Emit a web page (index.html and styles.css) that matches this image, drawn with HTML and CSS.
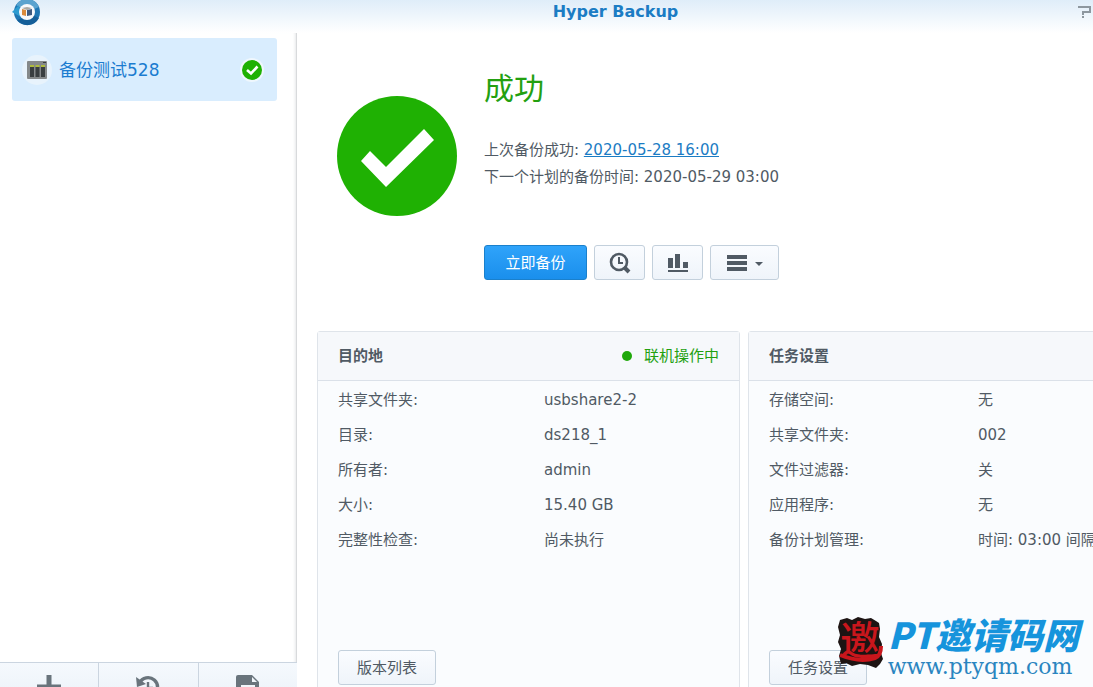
FILE: index.html
```html
<!DOCTYPE html>
<html lang="zh">
<head>
    <meta charset="UTF-8">
    <meta name="viewport" content="width=device-width, initial-scale=1.0">
    <title>Hyper Backup</title>
    <link rel="stylesheet" href="styles.css">
</head>

<body>
    <div class="window">
        <!-- 标题栏 -->
        <header class="titlebar">
            <svg class="logo" viewBox="0 0 28 28" aria-hidden="true">
                <circle cx="15" cy="14" r="13" fill="#1f76b3"/>
                <path d="M4 7 A13 13 0 0 1 27 9 L15 14 Z" fill="#5aa3cf"/>
                <path d="M0 14 L7 7 L9 19 Z" fill="#2c9bd0"/>
                <path d="M5 22 A13 13 0 0 0 27 20 L20 17 Z" fill="#155f99"/>
                <circle cx="15" cy="14" r="8" fill="#f6f9fc"/>
                <path d="M10 10 L15 9 L20 10 L15 12 Z" fill="#a8a8a4"/>
                <path d="M10 11 L14 12 V18 L10 17 Z" fill="#d98a3c"/>
                <path d="M15 12 L20 11 V17 L15 18 Z" fill="#3d5a80"/>
            </svg>
            <h1>Hyper Backup</h1>
            <button class="help" type="button" aria-label="帮助">
                <svg viewBox="0 0 16 14" width="16" height="14">
                    <path d="M1 2 H13 V7 H6 V10 M6 11 V13" fill="none" stroke="#8d979f" stroke-width="2"/>
                </svg>
            </button>
        </header>

        <div class="content">
            <!-- 左侧任务列表 -->
            <aside class="sidebar">
                <div class="task-list">
                    <a class="task" href="#">
                        <svg class="task-icon" viewBox="0 0 30 30" aria-hidden="true">
                            <circle cx="15" cy="15" r="15" fill="#e8f3fc"/>
                            <rect x="5" y="6" width="20" height="18" rx="1" fill="#85898a"/>
                            <path d="M8 12h4v10H8z M13.5 12h4v10h-4z M19 12h4v10h-4z" fill="#393e40"/>
                            <path d="M8 10h4v2H8z M13.5 10h4v2h-4z M19 10h4v2h-4z" fill="#aebb3e"/>
                            <path d="M21 7h3v1h-3z" fill="#393e40"/>
                        </svg>
                        <span class="task-name">备份测试528</span>
                        <svg class="task-state" viewBox="0 0 24 24" aria-label="成功">
                            <circle cx="12" cy="12" r="12" fill="#eff7fd"/>
                            <circle cx="12" cy="12" r="10" fill="#1fb103"/>
                            <path d="M7 12 L11 15.5 L17.5 8.5" fill="none" stroke="#fff" stroke-width="2.6"/>
                        </svg>
                    </a>
                </div>
                <div class="toolbar">
                    <button type="button" aria-label="新建">
                        <svg viewBox="0 0 24 24"><path d="M12 0v24 M0 12h24" stroke="#69747c" stroke-width="5"/></svg>
                    </button>
                    <button type="button" aria-label="还原">
                        <svg viewBox="0 0 24 24">
                            <path d="M3.5 8 A9.5 9.5 0 1 1 3 15" fill="none" stroke="#69747c" stroke-width="3.4"/>
                            <path d="M0 2 L1 12 L10 9 Z" fill="#69747c"/>
                            <path d="M12 7 V13 H17" fill="none" stroke="#69747c" stroke-width="2.4"/>
                        </svg>
                    </button>
                    <button type="button" aria-label="日志">
                        <svg viewBox="0 0 24 24">
                            <path d="M2 0 H16 L23 7 V22 a2 2 0 0 1 -2 2 H2 a2 2 0 0 1 -2 -2 V2 a2 2 0 0 1 2 -2z" fill="#69747c"/>
                            <path d="M16 2 V7 H21z" fill="#f0f5fa"/>
                            <path d="M5 11h14 M5 17h14" stroke="#f0f5fa" stroke-width="2"/>
                        </svg>
                    </button>
                </div>
            </aside>

            <main class="main">
                <!-- 备份状态 -->
                <section class="status">
                    <svg class="status-icon" viewBox="0 0 120 120" aria-hidden="true">
                        <circle cx="60" cy="60" r="60" fill="#1fb103"/>
                        <path d="M24 65 L33 55 L49 71 L87 33 L97 44 L49 91 Z" fill="#fff"/>
                    </svg>
                    <div class="status-body">
                        <h2>成功</h2>
                        <p>上次备份成功: <a href="#">2020-05-28 16:00</a></p>
                        <p>下一个计划的备份时间: 2020-05-29 03:00</p>
                        <div class="actions">
                            <button class="btn btn-primary" type="button">立即备份</button>
                            <button class="btn btn-icon" type="button" aria-label="浏览版本">
                                <svg viewBox="0 0 22 22" width="22" height="22">
                                    <circle cx="10" cy="10" r="8" fill="none" stroke="#505a64" stroke-width="2.6"/>
                                    <path d="M10 5 V11 H14" fill="none" stroke="#505a64" stroke-width="2"/>
                                    <path d="M15 15 L20 20" stroke="#505a64" stroke-width="4"/>
                                </svg>
                            </button>
                            <button class="btn btn-icon" type="button" aria-label="统计">
                                <svg viewBox="0 0 22 22" width="22" height="22">
                                    <path d="M1 6h5v10H1z M8 2h5v14H8z M16 10h5v6h-5z M1 18h20v2H1z" fill="#505a64"/>
                                </svg>
                            </button>
                            <button class="btn btn-menu" type="button" aria-label="更多">
                                <svg viewBox="0 0 36 22" width="36" height="22">
                                    <path d="M0 3h20v4H0z M0 9h20v4H0z M0 15h20v4H0z" fill="#505a64"/>
                                    <path d="M28 10h8l-4 4z" fill="#505a64"/>
                                </svg>
                            </button>
                        </div>
                    </div>
                </section>

                <!-- 详细信息 -->
                <div class="cards">
                    <section class="card">
                        <div class="card-head">
                            <h3>目的地</h3>
                            <span class="online">联机操作中</span>
                        </div>
                        <table>
                            <tr><th>共享文件夹:</th><td>usbshare2-2</td></tr>
                            <tr><th>目录:</th><td>ds218_1</td></tr>
                            <tr><th>所有者:</th><td>admin</td></tr>
                            <tr><th>大小:</th><td>15.40 GB</td></tr>
                            <tr><th>完整性检查:</th><td>尚未执行</td></tr>
                        </table>
                        <div class="card-foot"><button class="btn" type="button">版本列表</button></div>
                    </section>
                    <section class="card card-settings">
                        <div class="card-head">
                            <h3>任务设置</h3>
                        </div>
                        <table>
                            <tr><th>存储空间:</th><td>无</td></tr>
                            <tr><th>共享文件夹:</th><td>002</td></tr>
                            <tr><th>文件过滤器:</th><td>关</td></tr>
                            <tr><th>应用程序:</th><td>无</td></tr>
                            <tr><th>备份计划管理:</th><td>时间: 03:00 间隔</td></tr>
                        </table>
                        <div class="card-foot"><button class="btn" type="button">任务设置</button></div>
                    </section>
                </div>
            </main>
        </div>
    </div>

    <!-- 水印 -->
    <div class="watermark">
        <svg class="seal" viewBox="0 0 46 52" aria-hidden="true">
            <path d="M2 3 L9 1 L14 3 L20 0 L27 2 L33 1 L38 4 L41 6 L42 12 L41 20 L44 27 L43 36 L45 42 L42 47 L38 51 L30 48 L22 47 L14 49 L8 46 L3 47 L1 39 L3 32 L0 25 L2 18 L0 10 Z" fill="#1d1413"/>
            <text class="seal-text" x="22" y="38" text-anchor="middle">邀</text>
            <path d="M2 38 Q22 46 37 41 Q43 39 43 29" fill="none" stroke="#c9161c" stroke-width="4"/>
        </svg>
        <div class="watermark-text">
            <span class="site-name">PT邀请码网</span>
            <span class="site-url">www.ptyqm.com</span>
        </div>
    </div>
</body>
</html>
```

FILE: styles.css
```css
* {
    box-sizing: border-box;
}

body {
    margin: 0;
    height: 100vh;
    overflow: hidden;
    position: relative;
    font-family: "DejaVu Sans", "Noto Sans CJK SC", sans-serif;
    font-size: 15px;
    line-height: 20px;
    color: #505a64;
    background: #fff;
}

h1, h2, h3, p {
    margin: 0;
}

button {
    font: inherit;
    color: inherit;
    cursor: pointer;
}

/* 窗口比可视区域略大 */
.window {
    display: flex;
    flex-direction: column;
    width: calc(100% + 138px);
    height: calc(100vh + 24px);
}

.titlebar {
    display: grid;
    grid-template-columns: 1fr auto 1fr;
    align-items: center;
    height: 33px;
    padding: 0 12px 9px;
    grid-template-rows: 24px;
    background: linear-gradient(#dfedf9, #fff);
}

.logo {
    width: 28px;
    height: 28px;
}

.titlebar h1 {
    font-size: 16px;
    color: #1b7cc4;
}

.help {
    justify-self: end;
    display: flex;
    margin-right: 126px;
    padding: 0;
    border: none;
    background: none;
}

.content {
    flex: 1;
    display: flex;
    min-height: 0;
}

/* 左侧 */
.sidebar {
    flex: none;
    width: 297px;
    display: flex;
    flex-direction: column;
}

.task-list {
    flex: 1;
    padding: 5px 19px 0 12px;
    border-right: 1px solid #d8dadc;
    box-shadow: inset -3px 0 3px -2px #e6e8ea;
}

.task {
    display: flex;
    align-items: center;
    height: 63px;
    padding: 0 13px 0 10px;
    border-radius: 3px;
    background: #d9edfe;
    color: #1b7cd0;
    text-decoration: none;
}

.task-icon {
    width: 30px;
    height: 30px;
}

.task-name {
    flex: 1;
    margin-left: 7px;
    font-size: 17px;
}

.task-state {
    width: 24px;
    height: 24px;
}

.toolbar {
    display: flex;
    height: 49px;
    border-top: 1px solid #cbd5e0;
    background: linear-gradient(#f5f9fd, #eaf1f8);
}

.toolbar button {
    flex: 1;
    display: flex;
    align-items: center;
    justify-content: center;
    border: none;
    border-right: 1px solid #cbd5e0;
    background: none;
}

.toolbar button:last-child {
    border-right: none;
}

.toolbar svg {
    width: 24px;
    height: 24px;
}

/* 右侧 */
.main {
    flex: 1;
    display: flex;
    flex-direction: column;
    padding: 32px 60px 4px 20px;
}

.status {
    display: flex;
    gap: 27px;
    padding-left: 20px;
}

.status-icon {
    flex: none;
    width: 120px;
    height: 120px;
    margin-top: 31px;
}

.status h2 {
    margin-bottom: 24px;
    font-size: 30px;
    font-weight: normal;
    line-height: 48px;
    color: #23a010;
}

.status p {
    line-height: 27px;
}

.status a {
    color: #1b7cc4;
}

.actions {
    display: flex;
    gap: 7px;
    margin-top: 54px;
}

.btn {
    height: 35px;
    padding: 0 18px;
    border: 1px solid #c3d0dc;
    border-radius: 3px;
    background: linear-gradient(#fafcff, #eff4fa);
}

.btn-primary {
    width: 103px;
    border-color: #1a80cc;
    background: linear-gradient(#2fa3fa, #1a8fec);
    color: #fff;
}

.btn-icon,
.btn-menu {
    display: flex;
    align-items: center;
    justify-content: center;
    width: 51px;
    padding: 0;
}

.btn-menu {
    width: 69px;
}

.cards {
    flex: 1;
    display: grid;
    grid-template-columns: 1fr 1fr;
    gap: 8px;
    margin-top: 51px;
}

.card {
    display: flex;
    flex-direction: column;
    border: 1px solid #dfe4ea;
    border-radius: 3px;
    background: #fafcfe;
}

.card-head {
    display: flex;
    align-items: center;
    justify-content: space-between;
    height: 49px;
    padding: 0 20px;
    border-bottom: 1px solid #dbe1e9;
    background: #f6f8fb;
}

.card-head h3 {
    font-size: 15px;
}

.online {
    display: flex;
    align-items: center;
    gap: 12px;
    color: #23a010;
}

.online::before {
    content: "";
    width: 10px;
    height: 10px;
    border-radius: 50%;
    background: #1fa80a;
}

.card table {
    margin: 1px 20px 0;
    border-collapse: collapse;
    table-layout: fixed;
}

.card th,
.card td {
    height: 35px;
    padding: 0;
    font-weight: normal;
    text-align: left;
    white-space: nowrap;
}

.card th {
    width: 206px;
}

.card-settings th {
    width: 209px;
}

.card-foot {
    margin-top: auto;
    padding: 0 20px 21px;
}

/* 水印 */
.watermark {
    position: absolute;
    right: 14px;
    bottom: 8px;
    display: flex;
    align-items: flex-start;
    gap: 4px;
}

.seal {
    width: 46px;
    height: 52px;
    margin-top: 5px;
}

.seal-text {
    font-family: "Noto Sans CJK SC", sans-serif;
    font-size: 40px;
    font-weight: 500;
    fill: #c9161c;
}

.watermark-text {
    display: flex;
    flex-direction: column;
}

.site-name {
    font-family: "Noto Sans CJK SC", sans-serif;
    font-size: 36px;
    font-weight: 900;
    font-style: italic;
    line-height: 42px;
    color: #1694dc;
}

.site-url {
    font-family: "DejaVu Serif", serif;
    font-size: 22px;
    line-height: 25px;
    color: #2a85c0;
}
```
